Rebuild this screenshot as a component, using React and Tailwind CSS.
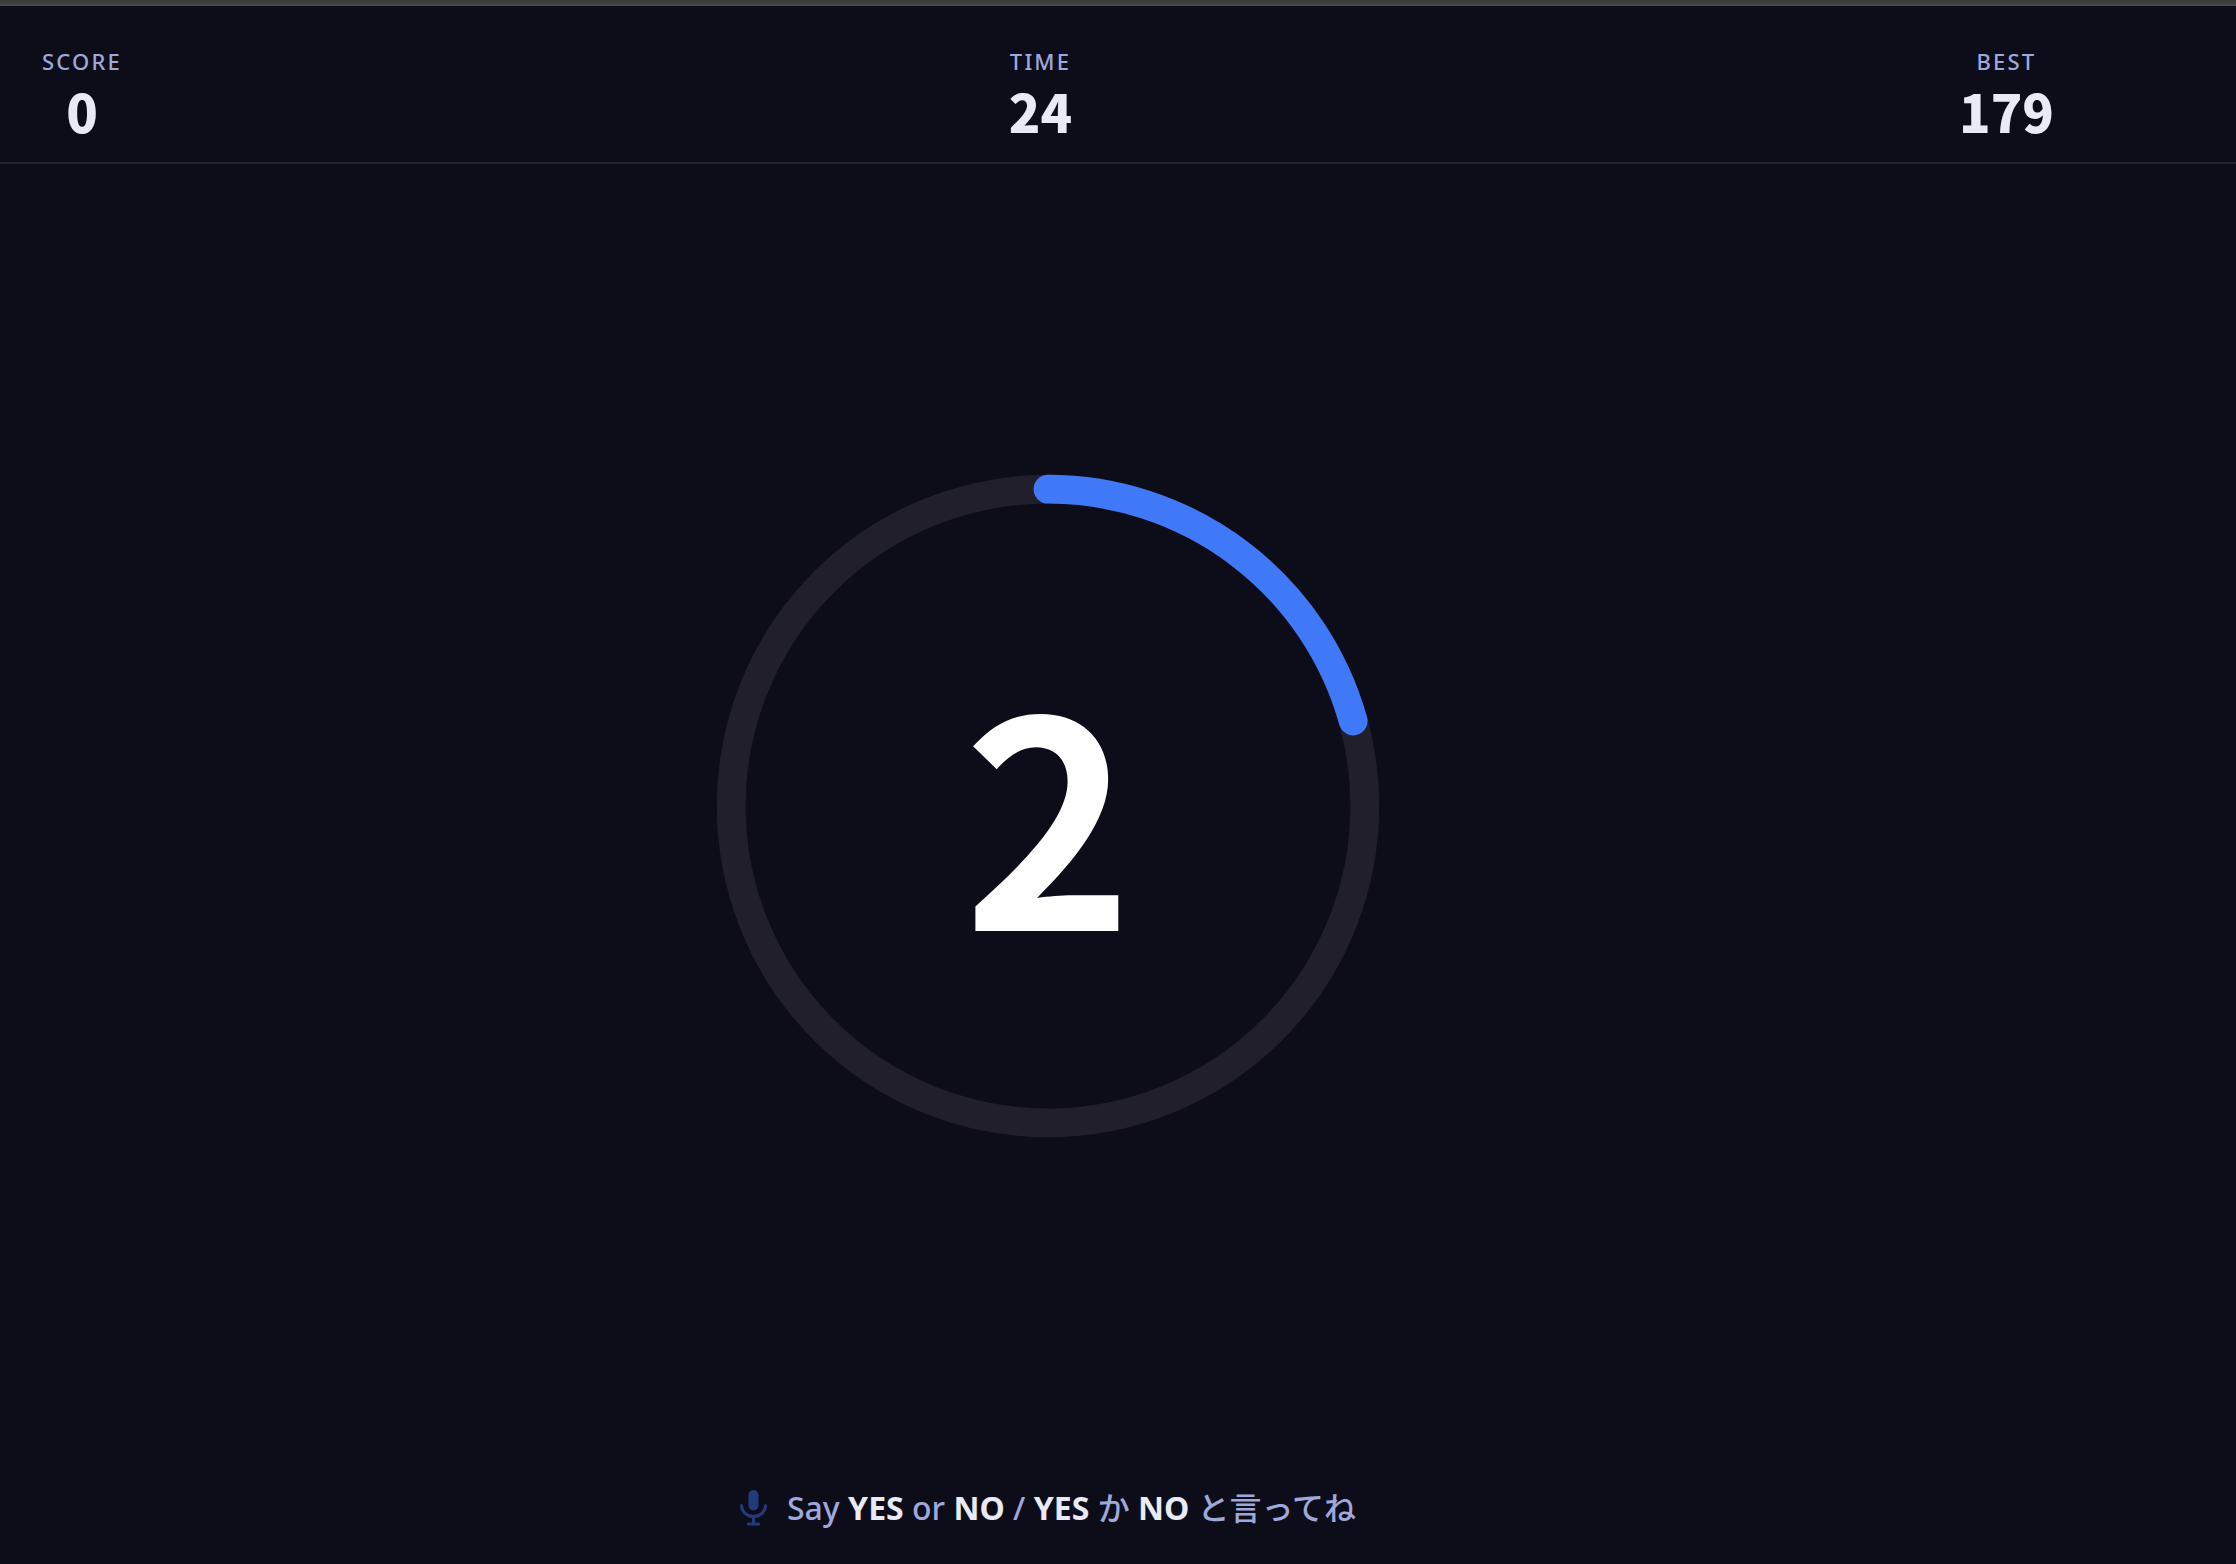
const stats = [
  { label: 'SCORE', value: '0' },
  { label: 'TIME', value: '24' },
  { label: 'BEST', value: '179' },
];

function Stat({ label, value }) {
  return (
    <div className="flex flex-col items-center">
      <dt className="font-['Noto_Sans',sans-serif] text-[22px] leading-8 font-medium tracking-widest text-[#9fa8da]">{label}</dt>
      <dd className="mt-1.5 text-[52px] leading-[56px] font-black text-[#e8eaf6]">{value}</dd>
    </div>
  );
}

function CountdownRing({ value, progress }) {
  return (
    <div className="relative grid size-[720px] place-items-center">
      <svg viewBox="0 0 100 100" className="absolute inset-0 size-full -rotate-90" fill="none" strokeWidth="4" aria-hidden="true">
        <circle cx="50" cy="50" r="44" stroke="#201f2b" />
        <circle
          cx="50"
          cy="50"
          r="44"
          stroke="#4079f8"
          strokeLinecap="round"
          pathLength="1000"
          strokeDasharray={`${progress * 1000} 1000`}
        />
      </svg>
      <p className="relative text-[288px] leading-none font-bold text-white">{value}</p>
    </div>
  );
}

function MicIcon() {
  return (
    <svg viewBox="0 0 27 36" className="h-9 w-[27px] text-[#233b7d]" fill="none" aria-hidden="true">
      <rect x="8.5" y="0" width="10" height="20.5" rx="5" fill="currentColor" />
      <path d="M1.5 15.5a12 11 0 0 0 24 0M13.5 26.5V33M8.3 34h10.4" stroke="currentColor" strokeWidth="3" strokeLinecap="round" />
    </svg>
  );
}

export default function App() {
  return (
    <div
      lang="ja"
      className="flex min-h-screen flex-col border-t-4 border-[#3d3d3d] bg-[#0d0d1a] font-['Noto_Sans_CJK_JP',sans-serif]"
    >
      <header className="border-t-2 border-b-2 border-t-[#484848] border-b-[#22222e] pr-[140px]">
        <dl className="flex items-center justify-between px-[42px] pt-[39px] pb-[23px]">
          {stats.map((s) => (
            <Stat key={s.label} {...s} />
          ))}
        </dl>
      </header>
      <main className="flex flex-1 items-center justify-center pr-[140px] pb-10">
        <CountdownRing value="2" progress={0.207} />
      </main>
      <footer className="flex items-center justify-center gap-5 pr-[140px] pb-9 text-[#9fa8da]">
        <MicIcon />
        <p className="font-['Noto_Sans','Noto_Sans_CJK_JP',sans-serif] text-[32px] leading-10 font-medium">
          Say <strong className="text-[#e8eaf6]">YES</strong> or <strong className="text-[#e8eaf6]">NO</strong> /{' '}
          <strong className="text-[#e8eaf6]">YES</strong> か <strong className="text-[#e8eaf6]">NO</strong> と言ってね
        </p>
      </footer>
    </div>
  );
}
